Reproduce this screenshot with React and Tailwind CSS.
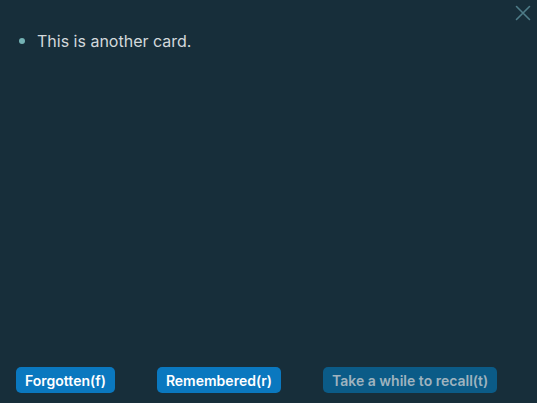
export default function App() {
  return (
    <div className="w-[537px] h-[403px] bg-[#172e3a] relative overflow-hidden flex flex-col" style={{ fontFamily: 'Inter, "Noto Sans", sans-serif' }}>
      <button className="absolute right-[6px] top-[5px] w-[16px] h-[16px] flex items-center justify-center">
        <svg width="16" height="16" viewBox="0 0 16 16" fill="none" stroke="#4e7c88" strokeWidth="1.6" strokeLinecap="round">
          <path d="M1.5 1.5 L14.5 14.5 M14.5 1.5 L1.5 14.5" />
        </svg>
      </button>
      <div className="flex-1 pt-[30px] pl-[19px]">
        <div className="flex items-center gap-[12px]">
          <span className="w-[6px] h-[6px] rounded-full bg-[#74b2b4]" />
          <span className="text-[16px] leading-[22px] text-[#d3d9dc]">This is another card.</span>
        </div>
      </div>
      <div className="flex items-center pl-[16px] pb-[10px]">
        <button className="h-[26px] px-[9px] rounded-[5px] bg-[#0a78bf] text-white text-[14px] font-semibold">Forgotten(f)</button>
        <button className="h-[26px] px-[9px] rounded-[5px] bg-[#0a78bf] text-white text-[14px] font-semibold ml-[42px]">Remembered(r)</button>
        <button className="h-[26px] px-[9px] rounded-[5px] bg-[#0b5b87] text-[#9fb3bf] text-[14px] font-semibold ml-[42px]">Take a while to recall(t)</button>
      </div>
    </div>
  );
}
